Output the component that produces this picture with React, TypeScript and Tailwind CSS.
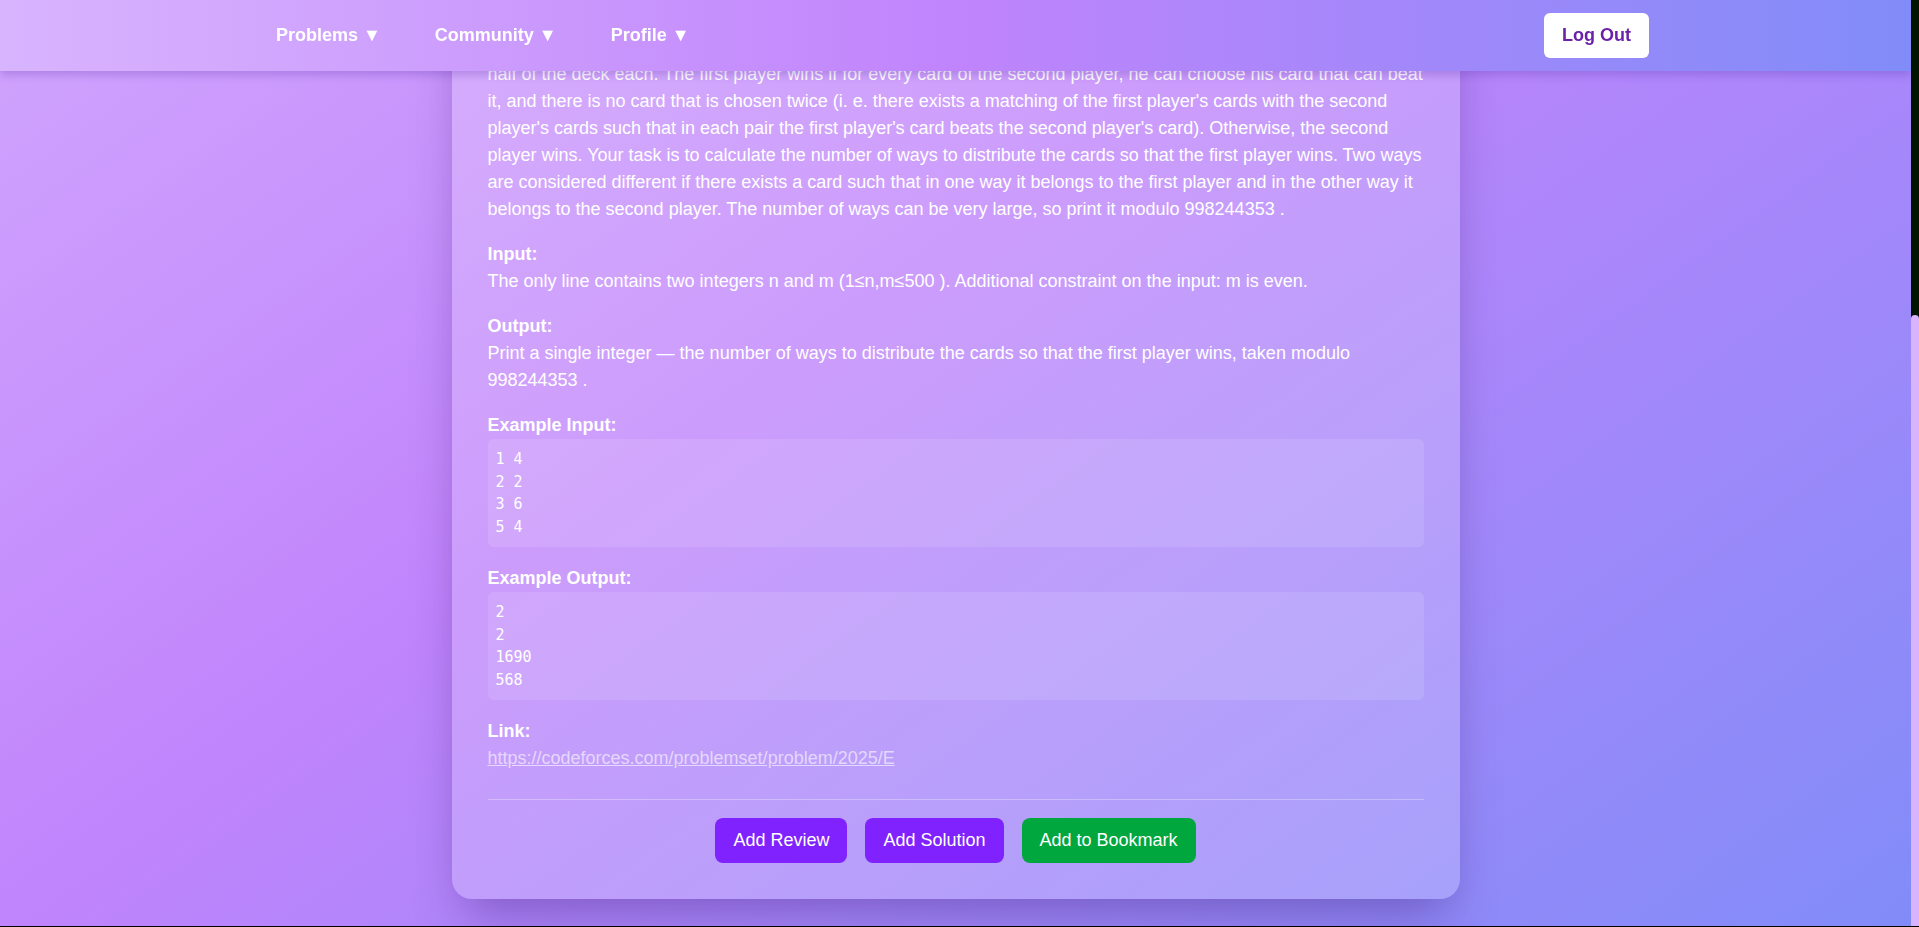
import React, { useLayoutEffect, useRef } from "react";

const statementA =
  "In the most popular card game in Berland, a deck of n×m cards is used. Each card has two parameters: suit and rank. Suits in the game are numbered from 1 to n , and ranks are numbered from 1 to m . There is exactly one card in the deck for each combination of suit and rank. A card with suit a and rank b can beat a card with suit c and rank d in one of two cases: a=1 , c≠1 (a card of suit 1 can beat a card of any other suit); a=c , b>d (a card can beat any other card of the same suit but of a lower rank). Two players play the game. Before the game starts, they receive exactly";
const statementB =
  "half of the deck each. The first player wins if for every card of the second player, he can choose his card that can beat it, and there is no card that is chosen twice (i. e. there exists a matching of the first player's cards with the second player's cards such that in each pair the first player's card beats the second player's card). Otherwise, the second player wins. Your task is to calculate the number of ways to distribute the cards so that the first player wins. Two ways are considered different if there exists a card such that in one way it belongs to the first player and in the other way it belongs to the second player. The number of ways can be very large, so print it modulo 998244353 .";

function Section({ label, children }: { label: string; children: React.ReactNode }) {
  return (
    <div className="mb-[18px]">
      <div className="font-bold">{label}</div>
      {children}
    </div>
  );
}

function Code({ text }: { text: string }) {
  return (
    <pre className="rounded-md bg-white/10 px-2 py-[9px] font-['DejaVu_Sans_Mono',monospace] text-[15px] leading-[1.5] whitespace-pre text-white">
      {text}
    </pre>
  );
}

export default function App() {
  const ref = useRef<HTMLDivElement>(null);
  useLayoutEffect(() => {
    if (ref.current) ref.current.scrollTop = ref.current.scrollHeight;
  }, []);

  return (
    <div className="h-screen bg-black font-['Liberation_Sans',Arial,sans-serif]">
      <div className="flex h-[926px]">
        <div
          ref={ref}
          className="min-w-0 flex-1 overflow-y-auto [scrollbar-width:none] [&::-webkit-scrollbar]:hidden"
        >
          <div className="min-h-full bg-[linear-gradient(to_bottom_right,#d8b4fe,#c084fc,#818cf8)] pb-[27px]">
            <header className="sticky top-0 z-10 flex h-[71px] items-center justify-between bg-[linear-gradient(to_right,#d8b4fe,#c084fc,#818cf8)] pl-[276px] pr-[262px] shadow-[0_4px_8px_rgba(80,40,160,0.25)]">
              <nav className="flex items-center gap-[54px] text-[18px] font-bold text-white">
                <span>Problems ▼</span>
                <span>Community ▼</span>
                <span>Profile ▼</span>
              </nav>
              <button className="rounded-md bg-white px-[18px] py-[9px] text-[18px] leading-[1.5] font-bold text-[#6b21a8]">
                Log Out
              </button>
            </header>

            <main className="mx-auto mt-[100px] w-[1008px] rounded-[20px] bg-white/20 p-9 text-[18px] leading-[1.5] text-white shadow-[0_25px_50px_-12px_rgba(40,0,90,0.35)]">
              <h1 className="mb-[18px] text-[28px] leading-[1.3] font-bold">E. Card Game</h1>
              <div className="mb-[18px]">
                <span className="font-bold">Difficulty:</span> 2200
              </div>
              <div className="mb-[18px]">
                <span className="font-bold">Tags:</span> combinatorics, dp, fft, greedy, math
              </div>
              <Section label="Description:">
                <p>
                  {statementA}
                  <br />
                  {statementB}
                </p>
              </Section>
              <Section label="Input:">
                <p>The only line contains two integers n and m (1≤n,m≤500 ). Additional constraint on the input: m is even.</p>
              </Section>
              <Section label="Output:">
                <p>Print a single integer — the number of ways to distribute the cards so that the first player wins, taken modulo 998244353 .</p>
              </Section>
              <Section label="Example Input:">
                <Code text={"1 4\n2 2\n3 6\n5 4"} />
              </Section>
              <Section label="Example Output:">
                <Code text={"2\n2\n1690\n568"} />
              </Section>
              <div>
                <div className="font-bold">Link:</div>
                <a href="#" className="text-white/60 underline">
                  https://codeforces.com/problemset/problem/2025/E
                </a>
              </div>
              <div className="mt-[27px] flex justify-center gap-[18px] border-t border-white/30 pt-[18px]">
                <button className="rounded-lg bg-[#7f22fe] px-[18px] py-[9px] text-white">Add Review</button>
                <button className="rounded-lg bg-[#7f22fe] px-[18px] py-[9px] text-white">Add Solution</button>
                <button className="rounded-lg bg-[#00a63e] px-[18px] py-[9px] text-white">Add to Bookmark</button>
              </div>
            </main>
          </div>
        </div>
        <div className="flex w-2 flex-col justify-end bg-[#001400]">
          <div className="h-[611px] rounded-t-[4px] bg-[#d8b4fe]" />
        </div>
      </div>
    </div>
  );
}
